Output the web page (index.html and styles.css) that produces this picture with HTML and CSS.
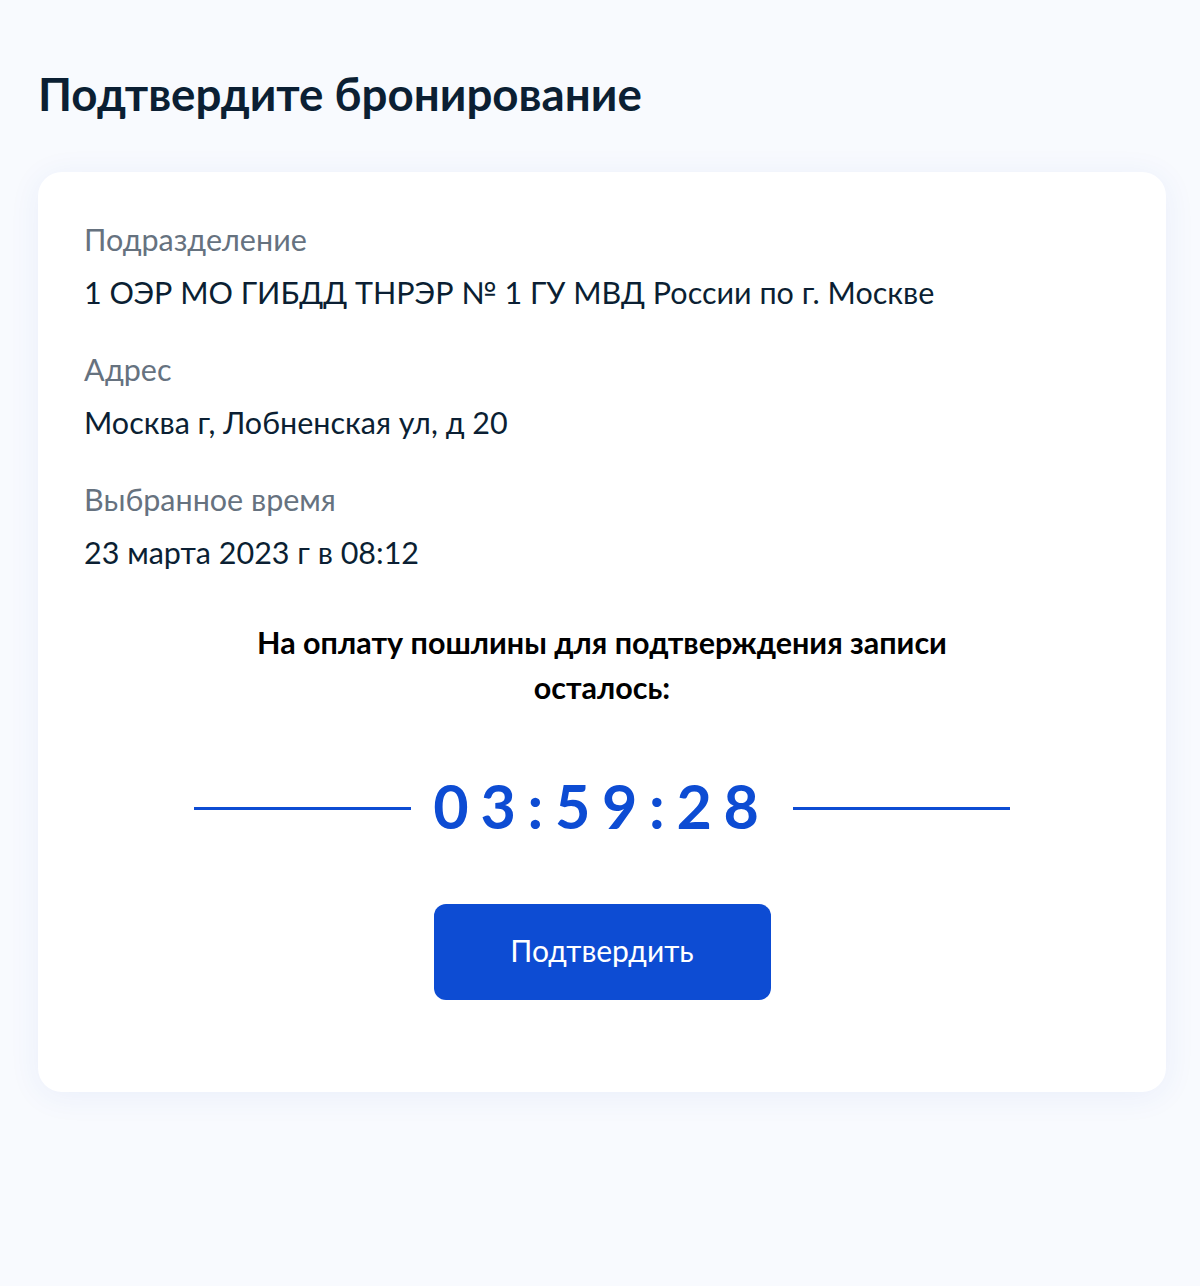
FILE: index.html
```html
<!DOCTYPE html>
<html lang="ru">

<head>
    <meta charset="UTF-8">
    <meta name="viewport" content="width=device-width, initial-scale=1.0">
    <title>Подтвердите бронирование</title>
    <link rel="stylesheet" href="styles.css">
</head>

<body>
    <main class="page">
        <h1 class="page-title">Подтвердите бронирование</h1>

        <section class="card">
            <div class="field">
                <div class="field-label">Подразделение</div>
                <div class="field-value">1 ОЭР МО ГИБДД ТНРЭР № 1 ГУ МВД России по г. Москве</div>
            </div>
            <div class="field">
                <div class="field-label">Адрес</div>
                <div class="field-value">Москва г, Лобненская ул, д 20</div>
            </div>
            <div class="field">
                <div class="field-label">Выбранное время</div>
                <div class="field-value">23 марта 2023 г в 08:12</div>
            </div>

            <p class="notice">На оплату пошлины для подтверждения записи осталось:</p>

            <div class="timer">
                <span class="timer-line"></span>
                <span class="timer-value">03:59:28</span>
                <span class="timer-line"></span>
            </div>

            <div class="actions">
                <button class="btn-primary">Подтвердить</button>
            </div>
        </section>
    </main>
</body>

</html>
```

FILE: styles.css
```css
body {
    margin: 0;
    font-family: Lato, 'Open Sans', sans-serif;
    background-color: #f8fafe;
    color: #0b1f33;
}

.page {
    padding: 64px 34px 190px 38px;
}

.page-title {
    font-size: 45.7px;
    font-weight: 700;
    line-height: 60px;
    margin: 0 0 48px;
}

.card {
    background-color: #ffffff;
    border-radius: 24px;
    box-shadow: 0 4px 32px rgba(40, 80, 200, 0.07);
    padding: 49px 46px 92px;
}

.field {
    margin-bottom: 41px;
}

.field:last-of-type {
    margin-bottom: 0;
}

.field-label {
    font-size: 30.5px;
    line-height: 36px;
    color: #66727f;
    margin-bottom: 17px;
}

.field-value {
    font-size: 30.5px;
    line-height: 36px;
}

.notice {
    max-width: 720px;
    margin: 50px auto 0;
    text-align: center;
    font-size: 30.5px;
    font-weight: 700;
    line-height: 45px;
    color: #000000;
}

.timer {
    display: flex;
    align-items: center;
    justify-content: center;
    gap: 22px;
    margin-top: 56px;
}

.timer-line {
    width: 217px;
    height: 3px;
    margin-top: 4px;
    background-color: #0d4cd3;
}

.timer-value {
    font-size: 61px;
    font-weight: 700;
    letter-spacing: 11.7px;
    line-height: 80px;
    color: #0d4cd3;
}

.actions {
    display: flex;
    justify-content: center;
    margin-top: 58px;
}

.btn-primary {
    width: 337px;
    height: 96px;
    padding: 0 0 5px;
    border: none;
    border-radius: 12px;
    background-color: #0d4cd3;
    color: #ffffff;
    font-family: inherit;
    font-size: 30px;
    cursor: pointer;
}
```
